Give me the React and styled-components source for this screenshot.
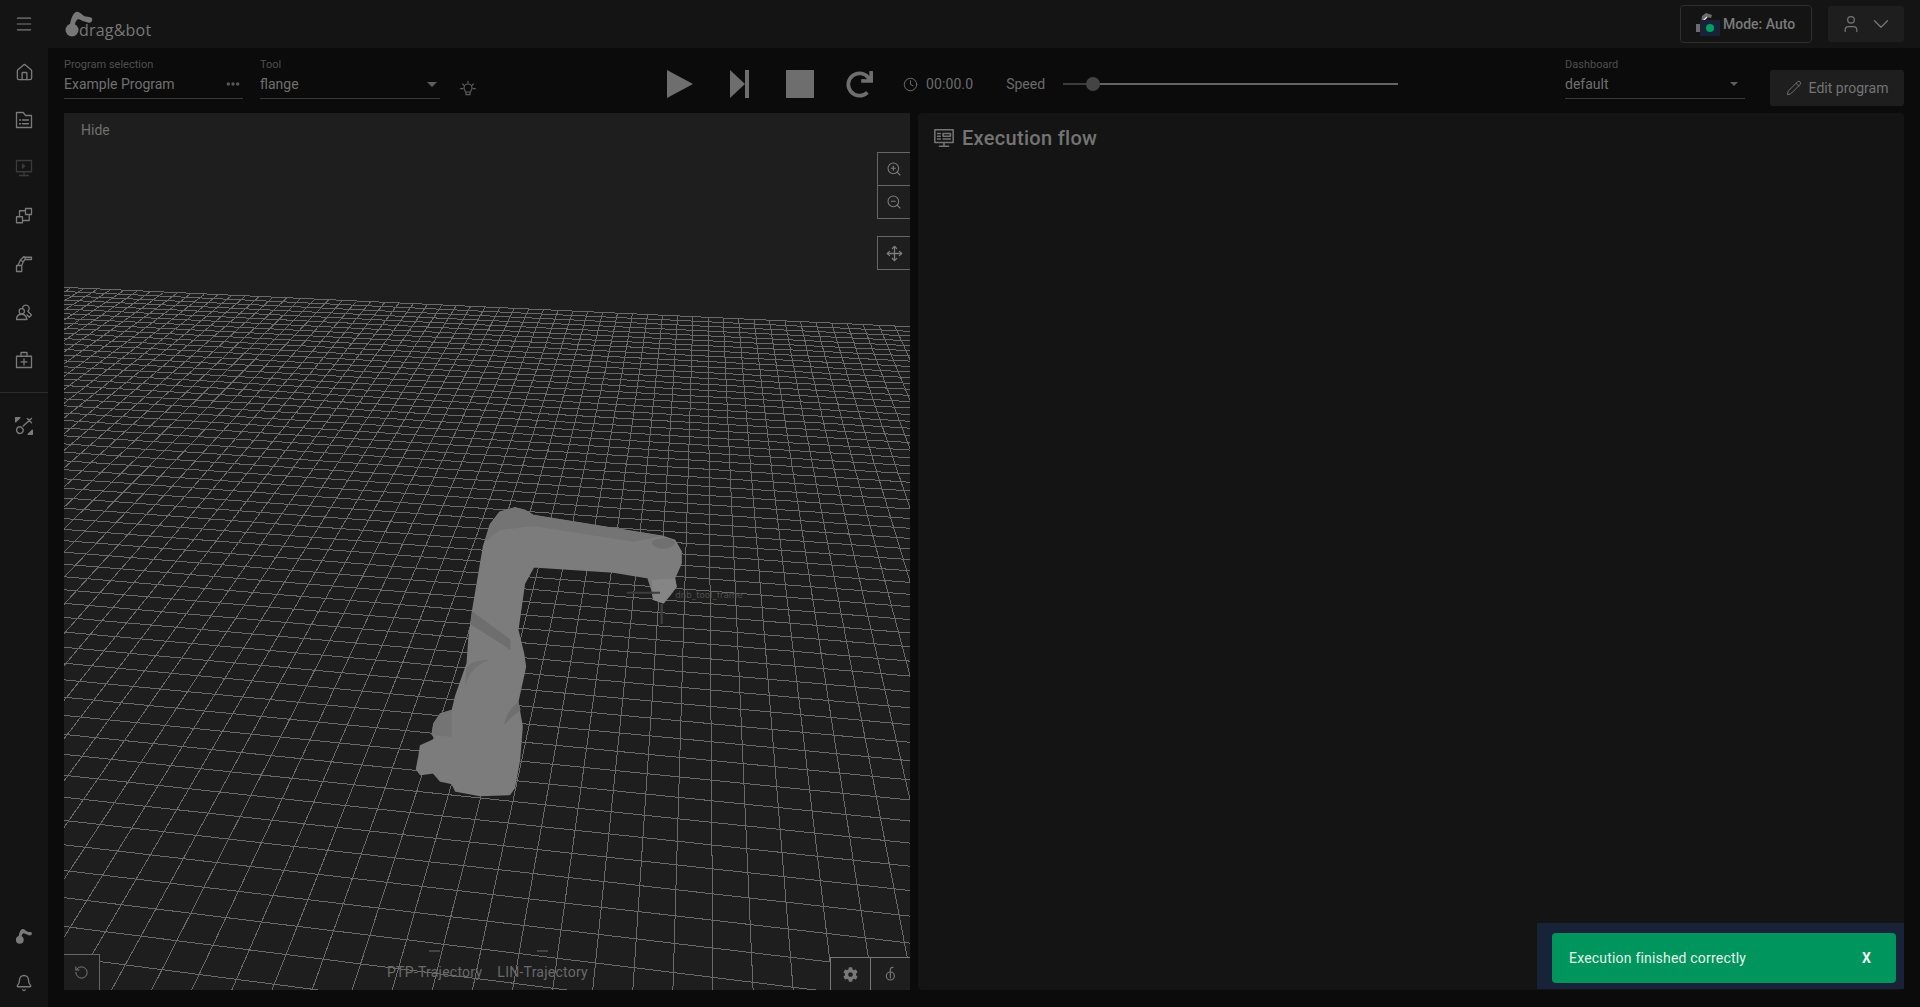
import React from "react";
import styled, { createGlobalStyle } from "styled-components";
import {
  Menu, House, Bell, Clock, Pencil, ZoomIn, ZoomOut, Move,
  RotateCcw, User, ChevronDown, Ellipsis,
} from "lucide-react";
import { FaCog, FaRedo } from "react-icons/fa";

const Global = createGlobalStyle`
  html, body { margin: 0; padding: 0; background: #0b0b0b; }
  body { font-family: Roboto, "Liberation Sans", sans-serif; color: #707070; }
  * { box-sizing: border-box; }
`;

const Page = styled.div`
  position: relative;
  display: flex;
  width: 1920px;
  height: 1007px;
  overflow: hidden;
  background: #0b0b0b;
`;

const Sidebar = styled.nav`
  display: flex;
  flex-direction: column;
  width: 48px;
  background: #141414;
`;

const NavGroup = styled.div`
  display: flex;
  flex-direction: column;
`;

const NavButton = styled.div`
  display: flex;
  align-items: center;
  justify-content: center;
  height: 48px;
  color: ${(p) => (p.$dim ? "#3a3a3a" : "#7a7a7a")};
`;

const NavDivider = styled.div`
  height: 1px;
  margin: 8px 0 9px;
  background: #2c2c2c;
`;

const Spacer = styled.div`
  flex: 1;
`;

const Main = styled.div`
  display: flex;
  flex: 1;
  flex-direction: column;
  min-width: 0;
`;

const TopBar = styled.header`
  display: flex;
  align-items: center;
  height: 48px;
  padding: 0 16px;
  background: #141414;
`;

const LogoWrap = styled.div`
  display: flex;
  align-items: flex-end;
  height: 48px;
  padding-bottom: 8px;
  color: #787878;
`;

const LogoText = styled.span`
  margin-left: -15px;
  font-family: "Open Sans", sans-serif;
  font-size: 16px;
  line-height: 20px;
  letter-spacing: 0.2px;
`;

const ModeButton = styled.div`
  display: flex;
  align-items: center;
  width: 132px;
  height: 38px;
  margin-left: auto;
  padding-left: 14px;
  border: 1px solid #2f2f2f;
  border-radius: 4px;
  font-size: 14px;
  font-weight: 500;
  color: #7a7a7a;
`;

const ModeIcon = styled.div`
  position: relative;
  width: 26px;
  height: 24px;
  margin-right: 2px;
`;

const ModeDot = styled.div`
  position: absolute;
  left: 5px;
  top: 8px;
  width: 20px;
  height: 16px;
  background: #18233a;
  &::after {
    content: "";
    position: absolute;
    left: 6px;
    top: 4px;
    width: 8px;
    height: 8px;
    border-radius: 50%;
    background: #00a060;
  }
`;

const UserButton = styled.div`
  display: flex;
  align-items: center;
  justify-content: center;
  gap: 7px;
  width: 76px;
  height: 36px;
  margin-left: 16px;
  padding-left: 3px;
  border-radius: 3px;
  background: #1e1e1e;
  color: #747474;
`;

const ToolBar = styled.div`
  display: flex;
  align-items: flex-start;
  height: 65px;
  padding-left: 16px;
  background: #0b0b0b;
`;

const Field = styled.div`
  position: relative;
  width: ${(p) => p.$width}px;
  height: 41px;
  margin-top: 10px;
  margin-left: ${(p) => p.$left || 0}px;
  border-bottom: 1px solid #3a3a3a;
`;

const FieldLabel = styled.div`
  font-size: 11px;
  line-height: 13px;
  color: #4f4f4f;
`;

const FieldValue = styled.div`
  margin-top: 4px;
  font-size: 14px;
  line-height: 18px;
  color: #707070;
`;

const Caret = styled.div`
  position: absolute;
  right: 3px;
  top: 24px;
  border-left: 5px solid transparent;
  border-right: 5px solid transparent;
  border-top: 5px solid #5e5e5e;
  ${(p) => p.$small && "right: 7px; border-left-width: 4px; border-right-width: 4px; border-top-width: 4px;"}
`;

const FieldDots = styled.div`
  position: absolute;
  right: 2px;
  top: 18px;
  color: #5e5e5e;
`;

const BulbWrap = styled.div`
  margin: 32px 0 0 20px;
  color: #5e5e5e;
`;

const Transport = styled.div`
  display: flex;
  align-items: center;
  height: 28px;
  margin: 22px 0 0 ${(p) => p.$left}px;
  color: #6e6e6e;
`;

const PlayIcon = styled.div`
  width: 0;
  height: 0;
  border-top: 14px solid transparent;
  border-bottom: 14px solid transparent;
  border-left: 26px solid #6e6e6e;
`;

const StepIcon = styled.div`
  display: flex;
  margin-left: 37px;
  &::before {
    content: "";
    width: 0;
    height: 0;
    border-top: 14px solid transparent;
    border-bottom: 14px solid transparent;
    border-left: 15px solid #6e6e6e;
  }
  &::after {
    content: "";
    width: 4px;
    height: 28px;
    background: #6e6e6e;
  }
`;

const StopIcon = styled.div`
  width: 28px;
  height: 28px;
  margin-left: 37px;
  background: #6e6e6e;
`;

const RedoWrap = styled.div`
  display: flex;
  margin-top: 1px;
  margin-left: 32px;
`;

const Timer = styled.div`
  display: flex;
  align-items: center;
  gap: 8px;
  margin-left: 30px;
  font-size: 14px;
  letter-spacing: 0.1px;
  color: #6b6b6b;
`;

const SpeedLabel = styled.div`
  margin-left: 33px;
  font-size: 14px;
  color: #6b6b6b;
`;

const SliderTrack = styled.div`
  position: relative;
  width: 335px;
  height: 2px;
  margin-left: 18px;
  background: #646464;
  &::before {
    content: "";
    position: absolute;
    left: 0;
    top: 0;
    width: 24px;
    height: 2px;
    background: #3c3c3c;
  }
`;

const SliderThumb = styled.div`
  position: absolute;
  left: 23px;
  top: -6px;
  width: 14px;
  height: 14px;
  border-radius: 50%;
  background: #444;
`;

const EditButton = styled.div`
  display: flex;
  align-items: center;
  justify-content: center;
  gap: 7px;
  width: 134px;
  height: 36px;
  margin: 22px 0 0 25px;
  border-radius: 3px;
  background: #1e1e1e;
  font-size: 14px;
  color: #747474;
`;

const Content = styled.div`
  display: flex;
  gap: 8px;
  height: 877px;
  padding: 0 16px;
`;

const Viewport = styled.section`
  position: relative;
  width: 846px;
  overflow: hidden;
  background: #1e1e1e;
`;

const Scene = styled.svg`
  display: block;
  position: absolute;
  inset: 0;
  width: 846px;
  height: 877px;
`;

const HideLabel = styled.div`
  position: absolute;
  left: 17px;
  top: 8px;
  font-size: 14px;
  line-height: 18px;
  color: #707070;
`;

const ViewTools = styled.div`
  position: absolute;
  right: 0;
  top: 39px;
  display: flex;
  flex-direction: column;
  width: 33px;
`;

const ViewTool = styled.div`
  display: flex;
  align-items: center;
  justify-content: center;
  height: 34px;
  margin-top: ${(p) => p.$gap || 0}px;
  margin-bottom: -1px;
  border: 1px solid #666;
  border-right: 0;
  background: #1e1e1e;
  color: #7c7c7c;
`;

const ResetBox = styled.div`
  position: absolute;
  left: 0;
  bottom: 0;
  display: flex;
  align-items: center;
  justify-content: center;
  width: 36px;
  height: 36px;
  border-top: 1px solid #666;
  border-right: 1px solid #666;
  background: #1e1e1e;
  color: #7a7a7a;
`;

const CornerTools = styled.div`
  position: absolute;
  right: 0;
  bottom: 0;
  display: flex;
`;

const CornerTool = styled.div`
  display: flex;
  align-items: center;
  justify-content: center;
  width: 40px;
  height: 33px;
  border-top: 1px solid #777;
  border-left: 1px solid #777;
  background: #1e1e1e;
  color: #787878;
`;

const Legend = styled.div`
  position: absolute;
  left: 323px;
  bottom: 9px;
  display: flex;
  gap: 15px;
`;

const LegendItem = styled.div`
  position: relative;
  font-size: 14px;
  line-height: 18px;
  letter-spacing: 0.25px;
  color: #6a6a6a;
  &::before {
    content: "";
    position: absolute;
    left: 44%;
    top: -13px;
    width: 11px;
    height: 2px;
    background: #444;
  }
`;

const FlowPanel = styled.section`
  flex: 1;
  padding: 12px 15px;
  border-radius: 4px;
  background: #141414;
`;

const FlowTitle = styled.h2`
  display: flex;
  align-items: center;
  gap: 7px;
  margin: 0;
  font-size: 20px;
  font-weight: 500;
  line-height: 26px;
  letter-spacing: 0.3px;
  color: #747474;
`;

const ToastArea = styled.div`
  position: absolute;
  right: 16px;
  bottom: 18px;
  width: 367px;
  height: 66px;
  padding: 10px 8px 6px 15px;
  background: #18233a;
`;

const Toast = styled.div`
  display: flex;
  align-items: center;
  justify-content: space-between;
  height: 50px;
  padding: 0 25px 0 17px;
  border-radius: 4px;
  background: #00955c;
  font-size: 14px;
  letter-spacing: 0.2px;
  color: #e4f3ec;
`;

const ToastClose = styled.span`
  font-weight: 700;
  color: #f2f8f5;
`;

const IconSvg = ({ size = 18, children }) => (
  <svg width={size} height={size} viewBox="0 0 24 24" fill="none" stroke="currentColor" strokeWidth="1.7" strokeLinejoin="round" strokeLinecap="round">
    {children}
  </svg>
);

const FilesIcon = () => (
  <IconSvg>
    <path d="M2 2h9l3 4h8v16H2z" />
    <path d="M6 12h1.500M10 12h8M6 17h1.500M10 17h8" />
  </IconSvg>
);

const MonitorIcon = () => (
  <IconSvg>
    <path d="M2 2h20v15H2zM12 17v4M6 22h12" />
    <path d="M10 7l3 2.500-3 2.500z" fill="currentColor" />
  </IconSvg>
);

const BlocksIcon = () => (
  <IconSvg>
    <path d="M6 5h13v13H6z" />
    <path d="M14 2h8v8h-8zM2 13h8v8H2z" fill="#141414" />
  </IconSvg>
);

const RobotIcon = () => (
  <IconSvg>
    <path d="M2 14h7v8H2zM4 14l3-7 4 2-2 5M7 7l5-5 2 3-3 4M12 3h10v3H14" />
  </IconSvg>
);

const TeamIcon = () => (
  <IconSvg>
    <circle cx="9" cy="11" r="3.500" />
    <path d="M2 22c0-5 3-7 7-7s6 2 7 7zM10 7a4.500 4.500 0 1 1 7 4l5 5-3 3-3-3" />
  </IconSvg>
);

const MedicalIcon = () => (
  <IconSvg>
    <path d="M2 7h20v15H2zM8 7V2h8v5M12 10.500v8M8 14.500h8" />
  </IconSvg>
);

const ToolsIcon = () => (
  <IconSvg size={20}>
    <path d="M2 2h5L2 7zM22 22h-5l5-5z" fill="currentColor" />
    <path d="M21 3l-10 9M8 13a4 4 0 1 0 3 3zM16 3l5 5" />
  </IconSvg>
);

const BulbIcon = () => (
  <IconSvg size={16}>
    <path d="M12 2v2M4 6l2 2M20 6l-2 2M1 13h3M20 13h3M8 18c0-3-2-3-2-6a6 6 0 0 1 12 0c0 3-2 3-2 6zM9 18h6v4H9z" />
  </IconSvg>
);

const FlowIcon = () => (
  <IconSvg size={22}>
    <path d="M2 3h20v14H2zM12 17v3M7 21h10" />
    <path d="M5 7h3M5 10h3M5 13h3M11 7h8v3h-8zM11 13h8" />
  </IconSvg>
);

const TouchIcon = () => (
  <IconSvg size={16}>
    <circle cx="11" cy="15" r="6" />
    <path d="M11 18V6c0-3 2-4 4-4" />
  </IconSvg>
);

const LogoMark = () => (
  <svg width="30" height="30" viewBox="0 0 30 30" style={{ marginBottom: 1 }}>
    <circle cx="8" cy="21" r="6.500" fill="currentColor" />
    <path d="M5.500 20C6 11 9 4 12 3c3-1 5 2 8 4 2 1 5 .5 7 1.500 2 1 1.500 4-.5 5-2 .8-4-.5-6-1-3-.8-5-3-7-2-2 1.300-3 5-2.500 9z" fill="currentColor" />
  </svg>
);

const ModeRobot = () => (
  <svg width="24" height="24" viewBox="0 0 24 24" fill="none">
    <path d="M1 12h5v8H1zM7 4l4-3 6 2-1 3-5-1-3 6H6z" fill="#6c6c6c" />
    <path d="M8 18V9l4-4" stroke="#e8e8e8" strokeWidth="1.400" />
  </svg>
);

function LogoMarkSmall() {
  return (
    <svg width="18" height="18" viewBox="0 0 30 30">
      <circle cx="8" cy="23" r="6.500" fill="currentColor" />
      <path d="M5.500 22C6 13 9 6 12 5c3-1 5 2 8 4 2 1 5 .5 7 1.500 2 1 1.500 4-.5 5-2 .8-4-.5-6-1-3-.8-5-3-7-2-2 1.300-3 5-2.500 9z" fill="currentColor" />
    </svg>
  );
}

// perspective floor: two families of lines running to their vanishing points
const VP_A = { x: 705, y: -95 };
const VP_B = { x: -7936, y: -85 };
const HORIZON_LEFT = -92;
const TOP_LEFT = 288;
const TOP_SLOPE = 0.046;
const ROW_STEP = 2.852e-5;

function gridLines() {
  const lines = [];
  for (let m = -42; m < 20; m++) {
    const y = HORIZON_LEFT + 1 / (1 / 695.3 - m * ROW_STEP);
    const slope = (y - VP_B.y) / (64 - VP_B.x);
    lines.push([64, y, 910, y + slope * 846]);
  }
  for (let i = -46; i < 14; i++) {
    const bx = 713 + 40.1 * i;
    const dxdy = (bx - VP_A.x) / (990 - VP_A.y);
    const topY = (TOP_LEFT + TOP_SLOPE * (VP_A.x - dxdy * VP_A.y - 64)) / (1 - TOP_SLOPE * dxdy);
    const topX = VP_A.x + dxdy * (topY - VP_A.y);
    lines.push([bx, 990, topX, topY]);
  }
  return lines;
}

const GRID = gridLines();

const Robot = () => (
  <g transform="translate(400 480) scale(0.33333)">
    <path
      d="M345 85L300 98 272 135 252 200 235 300 218 400 208 480 203 550 168 650 158 692 123 703 103 732 98 762 108 778 63 798 58 830 51 867 62 882 100 877 122 902 157 909 168 932 240 945 328 942 342 923 357 840 365 740 352 665 375 560 369 520 352 450 372 310 400 259 640 275 745 292 757 330 762 357 790 367 808 345 827 320 822 295 842 250 842 215 823 182 790 171 400 108 375 93Z"
      fill="#7c7c7c"
      stroke="#7c7c7c"
      strokeWidth="7"
      strokeLinejoin="round"
    />
    <path d="M345 82L300 95 270 135 255 185 300 150 400 138 700 185 790 168 400 105 375 90Z" fill="#747474" />
    <path d="M218 395L330 478 332 510 210 432Z" fill="#6e6e6e" />
    <path d="M200 560C215 545 240 540 270 540 230 550 205 580 195 620Z" fill="#727272" />
    <path d="M155 690L120 700 100 730 95 765 155 770Z" fill="#747474" />
    <path d="M355 665C335 680 320 700 312 735 335 710 350 700 362 690Z" fill="#6f6f6f" />
    <ellipse cx="790" cy="190" rx="34" ry="16" fill="#707070" />
    <path d="M755 300L825 295 830 320 810 345 790 370 760 360Z" fill="#858585" />
    <path d="M680 338H780" stroke="#3e3e3e" strokeWidth="6" />
    <path d="M785 372V432" stroke="#3e3e3e" strokeWidth="7" />
    <text x="826" y="353" fontFamily="'DejaVu Sans', sans-serif" fontSize="26" fill="#4e4e4e">dnb_tool_frame</text>
  </g>
);

export default function App() {
  return (
    <Page>
      <Global />
      <Sidebar>
        <NavButton><Menu size={20} strokeWidth={1.4} /></NavButton>
        <NavGroup>
          <NavButton><House size={19} strokeWidth={1.7} /></NavButton>
          <NavButton><FilesIcon /></NavButton>
          <NavButton $dim><MonitorIcon /></NavButton>
          <NavButton><BlocksIcon /></NavButton>
          <NavButton><RobotIcon /></NavButton>
          <NavButton><TeamIcon /></NavButton>
          <NavButton><MedicalIcon /></NavButton>
        </NavGroup>
        <NavDivider />
        <NavButton><ToolsIcon /></NavButton>
        <Spacer />
        <NavButton><LogoMarkSmall /></NavButton>
        <NavButton><Bell size={18} strokeWidth={1.8} /></NavButton>
      </Sidebar>

      <Main>
        <TopBar>
          <LogoWrap>
            <LogoMark />
            <LogoText>drag&amp;bot</LogoText>
          </LogoWrap>
          <ModeButton>
            <ModeIcon><ModeRobot /><ModeDot /></ModeIcon>
            Mode: Auto
          </ModeButton>
          <UserButton>
            <User size={20} strokeWidth={1.5} />
            <ChevronDown size={26} strokeWidth={1.3} />
          </UserButton>
        </TopBar>

        <ToolBar>
          <Field $width={179}>
            <FieldLabel>Program selection</FieldLabel>
            <FieldValue>Example Program</FieldValue>
            <FieldDots><Ellipsis size={16} strokeWidth={3} /></FieldDots>
          </Field>
          <Field $width={180} $left={17}>
            <FieldLabel>Tool</FieldLabel>
            <FieldValue>flange</FieldValue>
            <Caret />
          </Field>
          <BulbWrap><BulbIcon /></BulbWrap>
          <Transport $left={191}>
            <PlayIcon />
            <StepIcon />
            <StopIcon />
            <RedoWrap><FaRedo size={27} /></RedoWrap>
            <Timer><Clock size={15} strokeWidth={1.6} />00:00.0</Timer>
            <SpeedLabel>Speed</SpeedLabel>
            <SliderTrack><SliderThumb /></SliderTrack>
          </Transport>
          <Field $width={180} $left={167}>
            <FieldLabel>Dashboard</FieldLabel>
            <FieldValue>default</FieldValue>
            <Caret $small />
          </Field>
          <EditButton><Pencil size={16} strokeWidth={1.5} />Edit program</EditButton>
        </ToolBar>

        <Content>
          <Viewport>
            <Scene viewBox="64 113 846 877">
              <g stroke="#6a6a6a" strokeWidth="1" shapeRendering="crispEdges">
                {GRID.map((l, i) => <line key={i} x1={l[0]} y1={l[1]} x2={l[2]} y2={l[3]} />)}
              </g>
              <Robot />
            </Scene>
            <HideLabel>Hide</HideLabel>
            <ViewTools>
              <ViewTool><ZoomIn size={16} strokeWidth={1.6} /></ViewTool>
              <ViewTool><ZoomOut size={16} strokeWidth={1.6} /></ViewTool>
              <ViewTool $gap={18}><Move size={17} strokeWidth={1.8} /></ViewTool>
            </ViewTools>
            <ResetBox><RotateCcw size={15} strokeWidth={1.6} /></ResetBox>
            <Legend>
              <LegendItem>PTP-Trajectory</LegendItem>
              <LegendItem>LIN-Trajectory</LegendItem>
            </Legend>
            <CornerTools>
              <CornerTool><FaCog size={15} /></CornerTool>
              <CornerTool><TouchIcon /></CornerTool>
            </CornerTools>
          </Viewport>
          <FlowPanel>
            <FlowTitle><FlowIcon />Execution flow</FlowTitle>
          </FlowPanel>
        </Content>
      </Main>

      <ToastArea>
        <Toast>
          Execution finished correctly
          <ToastClose>X</ToastClose>
        </Toast>
      </ToastArea>
    </Page>
  );
}
